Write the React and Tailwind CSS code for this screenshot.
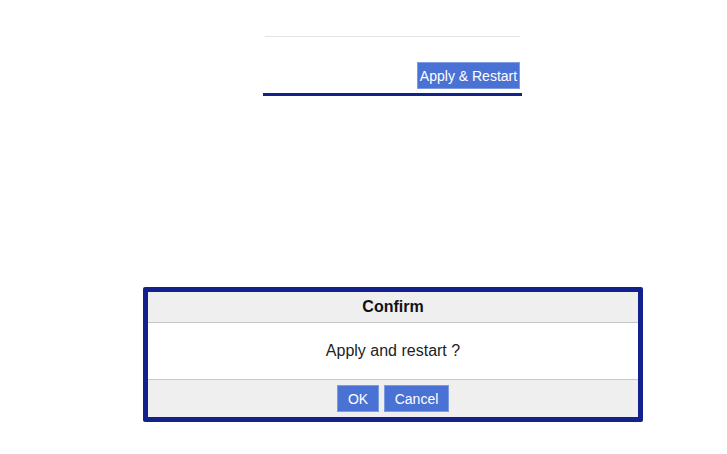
import React from 'react';

// Settings footer with the Apply & Restart action, and the confirm dialog it opens.

const font = { fontFamily: '"Liberation Sans", Arial, sans-serif' };

function BlueButton({ children, className = '' }) {
  return (
    <button
      type="button"
      className={`h-[27px] border border-[#7d9be3] bg-[#4a72d5] text-[14px] leading-none text-white ${className}`}
    >
      {children}
    </button>
  );
}

export default function App() {
  return (
    <div className="h-[454px] w-[727px] overflow-hidden bg-white" style={font}>
      <div className="ml-[263px] w-[259px] pt-[36px]">
        <div className="mx-[2px] h-px bg-[#e3e3e6]" />
        <div className="mt-[25px] flex justify-end pr-[2px]">
          <BlueButton className="w-[103px]">Apply &amp; Restart</BlueButton>
        </div>
        <div className="mt-[4px] h-[3px] bg-[#14238c]" />
      </div>

      <div
        role="dialog"
        className="ml-[143px] mt-[191px] w-[500px] rounded-[2px] border-[5px] border-[#12218b] bg-white"
      >
        <div className="flex h-[31px] items-center justify-center border-b border-[#c7c7c7] bg-[#efefef] text-[16px] font-bold text-[#111]">
          Confirm
        </div>
        <div className="flex h-[57px] items-center justify-center border-b border-[#c7c7c7] text-[16px] text-[#222]">
          Apply and restart ?
        </div>
        <div className="flex h-[37px] items-center justify-center gap-[5px] bg-[#efefef]">
          <BlueButton className="w-[42px]">OK</BlueButton>
          <BlueButton className="w-[65px]">Cancel</BlueButton>
        </div>
      </div>
    </div>
  );
}
